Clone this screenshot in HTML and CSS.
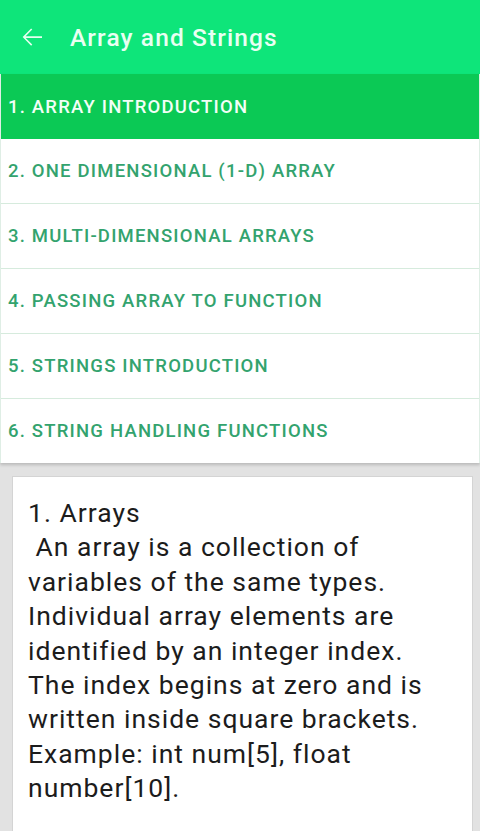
FILE: index.html
```html
<!DOCTYPE html>
<html>
<head>
<meta charset="utf-8">
<link rel="stylesheet" href="styles.css">
</head>
<body>
<div class="app">
  <header class="toolbar">
    <svg class="back" width="30" height="30" viewBox="0 0 24 24"><path d="M20 11.3H6.9l5.3-5.3-0.9-0.9L4.5 12l6.8 6.9 0.9-0.9-5.3-5.3H20z" fill="#e6fff0"/></svg>
    <h1 class="title">Array and Strings</h1>
  </header>
  <ul class="topics">
    <li class="topic active">1. ARRAY INTRODUCTION</li>
    <li class="topic">2. ONE DIMENSIONAL (1-D) ARRAY</li>
    <li class="topic">3. MULTI-DIMENSIONAL ARRAYS</li>
    <li class="topic">4. PASSING ARRAY TO FUNCTION</li>
    <li class="topic">5. STRINGS INTRODUCTION</li>
    <li class="topic">6. STRING HANDLING FUNCTIONS</li>
  </ul>
  <div class="content">
    <div class="card">
      <p class="text">1. Arrays<br>&nbsp;An array is a collection of variables of the same types. Individual array elements are identified by an integer index. The index begins at zero and is written inside square brackets. Example: int num[5], float number[10].</p>
    </div>
  </div>
</div>
</body>
</html>
```
FILE: styles.css
```css
html, body {
  margin: 0;
  padding: 0;
  height: 100%;
  overflow: hidden;
}
body {
  font-family: Roboto, "Noto Sans", sans-serif;
  background: #e2e2e2;
}
.app {
  display: flex;
  flex-direction: column;
  height: 831px;
}
.toolbar {
  height: 74px;
  background: #0ee57a;
  display: flex;
  align-items: center;
  padding-left: 17px;
  flex-shrink: 0;
}
.back {
  width: 30px;
  height: 30px;
}
.title {
  margin: 0 0 0 23px;
  font-size: 24.5px;
  font-weight: 500;
  letter-spacing: 1.1px;
  color: #e9fff2;
}
.topics {
  list-style: none;
  margin: 0;
  padding: 0;
  background: #fff;
  box-shadow: 0 2px 3px rgba(0,0,0,0.18);
  border-left: 1px solid #dfeee5;
  border-right: 1px solid #dfeee5;
  flex-shrink: 0;
  position: relative;
}
.topic {
  height: 64px;
  display: flex;
  align-items: center;
  padding-left: 7px;
  font-size: 18.5px;
  font-weight: 500;
  letter-spacing: 1.2px;
  color: #33a36e;
  border-bottom: 1px solid #d6ebdd;
}
.topic:last-child {
  border-bottom: none;
}
.topic.active {
  background: #0bc955;
  color: #f2fff7;
  border-bottom: none;
  height: 65px;
}
.content {
  flex: 1;
  padding: 13px 7px 0 12px;
  display: flex;
}
.card {
  flex: 1;
  background: #fff;
  border: 1px solid #d4d4d4;
  border-bottom: none;
  padding: 19px 30px 0 15px;
}
.text {
  margin: 0;
  font-size: 26.5px;
  line-height: 34.4px;
  letter-spacing: 1px;
  color: #1c1c1c;
}
```
